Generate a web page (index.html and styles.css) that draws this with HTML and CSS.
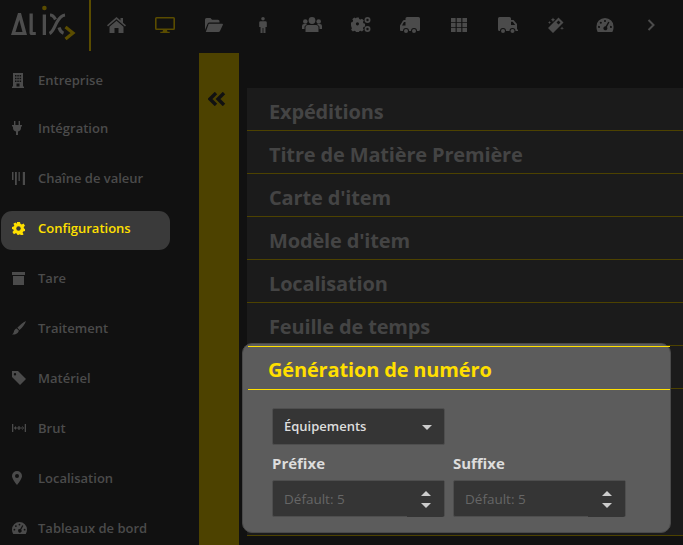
FILE: index.html
```html
<!DOCTYPE html>
<html lang="fr">
<head>
<meta charset="utf-8">
<title>Configurations</title>
<link rel="stylesheet" href="styles.css">
</head>
<body>
<svg class="sprite" width="0" height="0" aria-hidden="true">
  <symbol id="gauge" viewBox="0 0 20 16">
    <path fill-rule="evenodd" d="M10 0a10 10 0 0 1 10 10c0 2.200-.6 4.200-1.600 6H1.600A11 11 0 0 1 0 10 10 10 0 0 1 10 0zM10 2.200a1.200 1.200 0 1 0 0 2.400 1.200 1.200 0 0 0 0-2.400zM5.200 4.200a1.200 1.200 0 1 0 0 2.400 1.200 1.200 0 0 0 0-2.400zM3.200 9a1.200 1.200 0 1 0 0 2.400 1.200 1.200 0 0 0 0-2.400zM16.800 9a1.200 1.200 0 1 0 0 2.400 1.200 1.200 0 0 0 0-2.400zM13.700 4.200 10.700 9.500a2.300 2.300 0 1 0 1.500.8l2.900-5.400z"/>
  </symbol>
</svg>
<header class="topbar">
  <div class="logo">
    <svg width="78" height="44" viewBox="0 0 78 44">
      <path fill="#4d4d4d" fill-rule="evenodd" d="M18 13h3l6 22H11zM19.300 20 15.500 32h7z"/>
      <path fill="#4d4d4d" d="M29.500 13.500h3.300V32h3V35h-4c-1.500 0-2.300-.8-2.300-2.300z"/>
      <path fill="#4d4d4d" d="M42.700 14.500H46V35h-3.300z"/>
      <path fill="none" stroke="#4d4d4d" stroke-width="3.200" d="M65 15c-4 .5-6 3.500-8 7-2.500 4.500-4 10-7.500 11.500M50 15c2.500 0 4 1.500 5.500 4.500M59 27.500c1 3 2.300 5 4.500 5.700"/>
      <circle cx="44.400" cy="8" r="2.300" fill="#5a4c00"/>
      <path d="M65.500 27 73 33l-7.500 6" fill="none" stroke="#5a4c00" stroke-width="3.200"/>
    </svg>
  </div>
  <nav class="topnav">
    <a class="topicon"><svg width="19" height="16" viewBox="0 0 19 16"><path d="M9.500 0 13.500 3.500V1H16V5.700L19 8.300 18 9.500 9.500 2.300 1 9.500 0 8.300z"/><path d="M9.500 3.800 16.500 9.700V16H11.500V11H7.500V16H2.500V9.700z"/></svg></a>
    <a class="topicon active"><svg width="20" height="16" viewBox="0 0 20 16"><path fill-rule="evenodd" d="M1.500 0h17A1.500 1.500 0 0 1 20 1.500v10a1.500 1.500 0 0 1-1.500 1.500H12l.5 1.800h2.200V16H5.300v-1.200h2.200L8 13H1.500A1.500 1.500 0 0 1 0 11.500v-10A1.500 1.500 0 0 1 1.500 0zM1.600 1.600v9.800h16.800V1.600z"/></svg></a>
    <a class="topicon"><svg width="18" height="14" viewBox="0 0 18 14"><path d="M0 12V1.500A1.500 1.500 0 0 1 1.500 0h4L7 1.800h6A1.500 1.500 0 0 1 14.500 3.300V4.500H4.500A2 2 0 0 0 2.700 5.600z"/><path d="M3.700 5.700H17.200c.6 0 .9.500.7 1L15 13a1.700 1.700 0 0 1-1.500 1H.8z"/></svg></a>
    <a class="topicon"><svg width="8" height="16" viewBox="0 0 8 16"><circle cx="4" cy="1.800" r="1.800"/><path d="M1.500 4.200h5A1.300 1.300 0 0 1 7.800 5.500V10H6.500V16H4.400V11H3.600V16H1.500V10H.2V5.500A1.300 1.300 0 0 1 1.500 4.200z"/></svg></a>
    <a class="topicon"><svg width="20" height="15" viewBox="0 0 20 15"><circle cx="10" cy="3.500" r="3.400"/><circle cx="3.300" cy="4.500" r="2.300"/><circle cx="16.700" cy="4.500" r="2.300"/><path d="M6 8h8a2.500 2.500 0 0 1 2.500 2.500V15h-13v-4.500A2.500 2.500 0 0 1 6 8z"/><path d="M0 12V9a2 2 0 0 1 2-2h3L2.500 9.500V12zM20 12V9a2 2 0 0 0-2-2h-3l2.500 2.500V12z"/></svg></a>
    <a class="topicon"><svg width="20" height="15" viewBox="0 0 20 15"><path fill-rule="evenodd" d="M5.500 1.500h3l.4 1.700 1.500.7 1.500-.9 2 2-.9 1.500.6 1.500 1.700.5v3l-1.700.4-.6 1.500.9 1.500-2 2-1.500-.9-1.500.6-.4 1.700h-3l-.4-1.700-1.500-.6-1.500.9-2-2 .9-1.500-.6-1.500L0 10V7l1.700-.5.6-1.500-.9-1.500 2-2 1.500.9 1.500-.7zM7 6.800a1.700 1.700 0 1 0 0 3.400 1.700 1.700 0 0 0 0-3.400z" transform="translate(0 -1) scale(.92)"/><path fill-rule="evenodd" d="M16.500 0a3 3 0 1 1 0 6 3 3 0 0 1 0-6zM16.500 1.800a1.200 1.200 0 1 0 0 2.400 1.200 1.200 0 0 0 0-2.400zM16.500 9a3 3 0 1 1 0 6 3 3 0 0 1 0-6zM16.500 10.800a1.200 1.200 0 1 0 0 2.400 1.200 1.200 0 0 0 0-2.400z"/></svg></a>
    <a class="topicon"><svg width="20" height="16" viewBox="0 0 20 16"><path fill-rule="evenodd" d="M7 0H18.500A1.500 1.500 0 0 1 20 1.500V12.500A1.500 1.500 0 0 1 18.500 14H17a3 3 0 0 0-6 0H9a3 3 0 0 0-6 0H1A1 1 0 0 1 0 13V8.500L3 3.500A2 2 0 0 1 4.500 3H5.500V1.500A1.500 1.500 0 0 1 7 0zM4 5 2 8.500H5.500V5z"/><circle cx="6" cy="14" r="2"/><circle cx="14" cy="14" r="2"/></svg></a>
    <a class="topicon"><svg width="16" height="14" viewBox="0 0 16 14"><path d="M0 0h4.600v4.200H0zM5.700 0h4.600v4.200H5.700zM11.400 0H16v4.200h-4.600zM0 4.900h4.600v4.200H0zM5.700 4.900h4.600v4.200H5.700zM11.400 4.900H16v4.200h-4.600zM0 9.800h4.600V14H0zM5.700 9.800h4.600V14H5.700zM11.400 9.800H16V14h-4.600z"/></svg></a>
    <a class="topicon"><svg width="20" height="16" viewBox="0 0 20 16"><path fill-rule="evenodd" d="M1.500 0H11.500A1.500 1.500 0 0 1 13 1.500V3H15.500L19 7V12.500H20V14H17.500a3 3 0 0 0-6 0H8a3 3 0 0 0-6 0H1.500A1.500 1.500 0 0 1 0 12.500V1.500A1.500 1.500 0 0 1 1.500 0zM13 4.700V8H17.200L14.700 4.700z"/><circle cx="5" cy="14" r="2"/><circle cx="14.500" cy="14" r="2"/></svg></a>
    <a class="topicon"><svg width="16" height="16" viewBox="0 0 16 16"><path d="M10.500.5 15.500 5.500 5 16 0 11zM10.500 3.500 8.500 5.500 10.500 7.500 12.500 5.500z"/><path d="M5 .5 5.700 2 7.200 2.700 5.700 3.400 5 5 4.300 3.400 2.800 2.700 4.300 2zM1.500 4 2 5 3 5.500 2 6 1.500 7 1 6 0 5.500 1 5zM14 9.500 14.500 10.700 16 11.200 14.500 11.800 14 13 13.500 11.800 12 11.200 13.500 10.700z"/></svg></a>
    <a class="topicon"><svg width="18" height="14" viewBox="0 0 20 16"><use href="#gauge"/></svg></a>
    <a class="topicon more"><svg width="8" height="12" viewBox="0 0 8 12"><path d="M1.500 1 6.500 6 1.500 11" fill="none" stroke="#4b4b4b" stroke-width="2"/></svg></a>
  </nav>
</header>
<div class="shell">
  <aside class="sidebar">
    <a class="item first"><span class="ico"><svg width="12" height="15" viewBox="0 0 12 15"><path fill-rule="evenodd" d="M1 0h10v13.500h1V15H0v-1.500h1zM3 2v1.500h1.500V2zM5.300 2v1.500h1.500V2zM7.600 2v1.500h1.500V2zM3 4.700v1.500h1.500V4.700zM5.300 4.700v1.500h1.500V4.700zM7.600 4.700v1.500h1.500V4.700zM3 7.400v1.500h1.500V7.400zM5.300 7.400v1.500h1.500V7.400zM7.600 7.400v1.500h1.500V7.400zM4.500 10.500v3h3v-3z"/></svg></span>Entreprise</a>
    <a class="item"><span class="ico"><svg width="10" height="14" viewBox="0 0 10 14"><path d="M2 0h1.400v4H2zM6.600 0H8v4H6.600zM0 4h10v1.500H9V7A3.500 3.500 0 0 1 6 10.400V14H4V10.400A3.500 3.500 0 0 1 1 7V5.500H0z"/></svg></span>Intégration</a>
    <a class="item"><span class="ico"><svg width="13" height="13" viewBox="0 0 13 13"><path d="M0 0h1.500v8H0zM3 0h1.800v13H3zM6.500 0h1.300v9H6.500zM10.800 0H13v13h-2.200z"/></svg></span>Chaîne de valeur</a>
    <a class="item active"><span class="ico"><svg width="13" height="13" viewBox="0 0 13 13"><path fill-rule="evenodd" d="M5 0h3l.4 1.800 1.500.7 1.600-.9 1.500 2.200-1.300 1.300.3 1.300L13 7v2l-1.900.4-.5 1.300 1 1.600-2.100 1.500-1.200-1.300-1.300.1L6.500 13h-1l-.7-1.400-1.300-.4-1.600 1L.4 10l1.300-1.300L1.400 7.400 0 7V5l1.700-.4.600-1.400-1-1.500L3.500.4l1.200 1.300z"/><circle cx="6.500" cy="6.500" r="2.200" fill="#3a3a3a"/></svg></span>Configurations</a>
    <a class="item"><span class="ico"><svg width="13" height="13" viewBox="0 0 13 13"><path d="M0 0h13v3H0zM1 4h11v9H1z"/></svg></span>Tare</a>
    <a class="item"><span class="ico"><svg width="14" height="14" viewBox="0 0 14 14"><path d="M14 0C13 3 10 7 7.500 9L5.300 6.800C7.500 4.500 11 1 14 0zM4.700 7.500 6.800 9.600C6.700 12 4 14 0 13.500 1.500 12.700 1.600 11.700 2 10.300 2.400 8.800 3.400 7.800 4.700 7.500z"/></svg></span>Traitement</a>
    <a class="item"><span class="ico"><svg width="14" height="14" viewBox="0 0 14 14"><path fill-rule="evenodd" d="M0 0h6l8 8-6 6-8-8zM3 2a1.200 1.200 0 1 0 0 2.400A1.200 1.200 0 0 0 3 2z"/></svg></span>Matériel</a>
    <a class="item"><span class="ico"><svg width="14" height="8" viewBox="0 0 14 8"><path d="M0 0h1.300v8H0zM12.700 0H14v8h-1.300zM3 3.400h8v1.200H3zM1.800 4 4 2v4zM12.200 4 10 2v4zM6.400 2h1.200v4H6.400z"/></svg></span>Brut</a>
    <a class="item"><span class="ico"><svg width="10" height="14" viewBox="0 0 10 14"><path fill-rule="evenodd" d="M5 0a5 5 0 0 1 5 5c0 2.500-3 6.500-5 9-2-2.500-5-6.500-5-9a5 5 0 0 1 5-5zM5 3a2 2 0 1 0 0 4 2 2 0 0 0 0-4z"/></svg></span>Localisation</a>
    <a class="item"><span class="ico"><svg width="15" height="12" viewBox="0 0 20 16"><use href="#gauge"/></svg></span>Tableaux de bord</a>
  </aside>
  <div class="collapse">
    <svg class="collapse-icon" width="18" height="14" viewBox="0 0 18 14"><path d="M8 1 2 7l6 6M16 1l-6 6 6 6" fill="none" stroke="#111" stroke-width="3.400"/></svg>
  </div>
  <main class="main">
    <div class="row">Expéditions</div>
    <div class="row">Titre de Matière Première</div>
    <div class="row">Carte d'item</div>
    <div class="row">Modèle d'item</div>
    <div class="row">Localisation</div>
    <div class="row">Feuille de temps</div>
    <div class="row"></div>
    <div class="rowbody"></div>
    <section class="panel">
      <h2 class="panel-title">Génération de numéro</h2>
      <div class="panel-body">
        <div class="select"><span>Équipements</span><i class="caret"></i></div>
        <div class="fields">
          <div class="field">
            <label class="label">Préfixe</label>
            <div class="input"><span>Défault: 5</span><div class="spin"><i class="up"></i><i class="down"></i></div></div>
          </div>
          <div class="field">
            <label class="label">Suffixe</label>
            <div class="input"><span>Défault: 5</span><div class="spin"><i class="up"></i><i class="down"></i></div></div>
          </div>
        </div>
      </div>
    </section>
  </main>
</div>
</body>
</html>
```
FILE: styles.css
```css
* { box-sizing: border-box; }
html, body { height: 100%; }
body {
  margin: 0;
  width: 683px;
  height: 545px;
  overflow: hidden;
  background: #111;
  font-family: "Open Sans", "Noto Sans", sans-serif;
  display: flex;
  flex-direction: column;
}
.sprite { position: absolute; }
.topbar { height: 53px; display: flex; flex: none; }
.logo {
  width: 91px;
  height: 51px;
  border-right: 2px solid #5a4c00;
}
.logo svg { display: block; }
.topnav { display: flex; padding-left: 1px; }
.topicon {
  width: 48.900px;
  height: 49px;
  display: flex;
  align-items: center;
  justify-content: center;
  fill: #4b4b4b;
}
.topicon.active { fill: #5a4c00; }
.topicon.more { width: 42px; }
.shell { flex: 1; display: flex; min-height: 0; }
.sidebar { width: 199px; flex: none; padding-top: 4px; }
.item {
  height: 50px;
  display: flex;
  align-items: center;
  margin-left: 1px;
  width: 169px;
  padding-left: 11px;
  color: #4b4b4b;
  fill: #4b4b4b;
  font-size: 13px;
  font-weight: 600;
  position: relative;
  white-space: nowrap;
}
.item.first { height: 46px; }
.item.active { color: #ffe000; fill: #ffe000; }
.item.active::before {
  content: "";
  position: absolute;
  inset: 8px 0 3px 0;
  background: #3a3a3a;
  border-radius: 11px;
  z-index: -1;
}
.ico { width: 26px; display: flex; align-items: center; }
.collapse {
  width: 40px;
  flex: none;
  background: #4d4200;
  display: flex;
  justify-content: center;
  padding-top: 39px;
  align-items: flex-start;
}
.collapse-icon { margin-right: 5px; }
.main {
  flex: 1;
  margin-left: 8px;
  padding-top: 35px;
  position: relative;
  min-width: 0;
}
.row {
  height: 43px;
  background: #1b1b1b;
  border-bottom: 1px solid #4d4200;
  color: #444;
  font-size: 20px;
  font-weight: 700;
  letter-spacing: -0.16px;
  padding: 4px 0 0 22px;
  display: flex;
  align-items: center;
  white-space: nowrap;
}
.rowbody {
  height: 147px;
  background: #1b1b1b;
  border-bottom: 1px solid #4d4200;
}
.panel {
  position: absolute;
  left: -5px;
  top: 290px;
  width: 429px;
  height: 190px;
  background: #5c5c5c;
  border: 1px solid #4a4a4a;
  border-radius: 10px;
  padding: 2px 0 0 5px;
}
.panel-title {
  margin: 0;
  height: 44px;
  border-top: 1px solid #ffe000;
  border-bottom: 1px solid #ffe000;
  color: #ffdf00;
  font-size: 20px;
  font-weight: 700;
  letter-spacing: -0.16px;
  padding: 2px 0 0 20px;
  display: flex;
  align-items: center;
  white-space: nowrap;
}
.panel-body { padding: 18px 0 0 24px; }
.select {
  width: 173px;
  height: 37px;
  background: #353535;
  border: 1px solid #4e4e4e;
  border-radius: 2px;
  color: #ddd;
  font-size: 13px;
  font-weight: 600;
  padding: 0 12px 2px 11px;
  display: flex;
  align-items: center;
  justify-content: space-between;
}
.caret {
  width: 0;
  height: 0;
  border-left: 5px solid transparent;
  border-right: 5px solid transparent;
  border-top: 5px solid #ccc;
  margin-top: 4px;
}
.fields { display: flex; gap: 8px; }
.field { width: 173px; }
.label {
  display: block;
  color: #ddd;
  font-size: 15px;
  font-weight: 700;
  height: 35px;
  line-height: 36px;
}
.input {
  height: 37px;
  background: #353535;
  border: 1px solid #4e4e4e;
  border-radius: 2px;
  color: #666;
  font-size: 13.500px;
  padding-left: 11px;
  display: flex;
  align-items: center;
  justify-content: space-between;
  position: relative;
}
.spin {
  position: absolute;
  right: 0;
  top: 0;
  bottom: -1px;
  width: 37px;
  background: #353535;
  display: flex;
  flex-direction: column;
  align-items: center;
  justify-content: center;
  gap: 7px;
  border-radius: 0 0 2px 0;
}
.up, .down { width: 0; height: 0; border-left: 5px solid transparent; border-right: 5px solid transparent; }
.up { border-bottom: 5px solid #ccc; }
.down { border-top: 5px solid #ccc; }
```
